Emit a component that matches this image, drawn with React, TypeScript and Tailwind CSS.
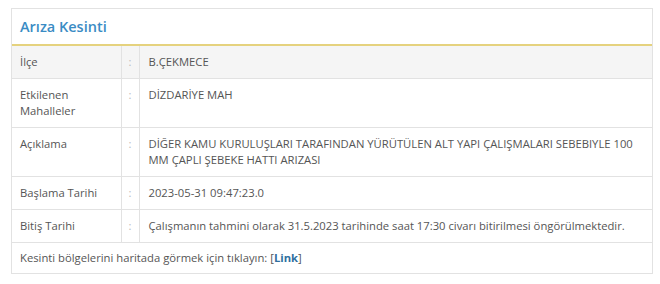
export default function App() {
  const rows = [
    { label: "İlçe", value: "B.ÇEKMECE", shaded: true },
    { label: "Etkilenen Mahalleler", value: "DİZDARİYE MAH" },
    {
      label: "Açıklama",
      value:
        "DİĞER KAMU KURULUŞLARI TARAFINDAN YÜRÜTÜLEN ALT YAPI ÇALIŞMALARI SEBEBIYLE 100 MM ÇAPLI ŞEBEKE HATTI ARIZASI",
    },
    { label: "Başlama Tarihi", value: "2023-05-31 09:47:23.0" },
    {
      label: "Bitiş Tarihi",
      value: "Çalışmanın tahmini olarak 31.5.2023 tarihinde saat 17:30 civarı bitirilmesi öngörülmektedir.",
    },
  ]

  return (
    <div className="w-[660px] h-[284px] bg-white pt-2 pl-[11px] font-['Open_Sans',sans-serif] text-[11.25px] text-[#555]">
      <div className="w-[642px] border border-[#e2e2e2] bg-white">
        <div className="h-[37px] flex items-center px-2 border-b-2 border-[#e5d27e]">
          <span className="text-[14.5px] font-semibold text-[#3a8cc4]">Arıza Kesinti</span>
        </div>
        <table className="w-full border-collapse">
          <tbody>
            {rows.map((row) => (
              <tr
                key={row.label}
                className={`border-b border-[#e2e2e2] ${row.shaded ? "bg-[#f5f5f5]" : ""}`}
              >
                <td className="w-[109px] px-2 py-2 align-top leading-4 border-r border-[#e2e2e2]">
                  {row.label}
                </td>
                <td className="w-[18px] py-2 align-top leading-4 text-center text-[#bbb] border-r border-[#e2e2e2]">
                  :
                </td>
                <td className="px-[9px] py-2 align-top leading-4">{row.value}</td>
              </tr>
            ))}
            <tr>
              <td colSpan={3} className="px-2 py-[7px] leading-4">
                Kesinti bölgelerini haritada görmek için tıklayın: [
                <span className="font-bold text-[#2f6f9f]">Link</span>]
              </td>
            </tr>
          </tbody>
        </table>
      </div>
    </div>
  )
}
